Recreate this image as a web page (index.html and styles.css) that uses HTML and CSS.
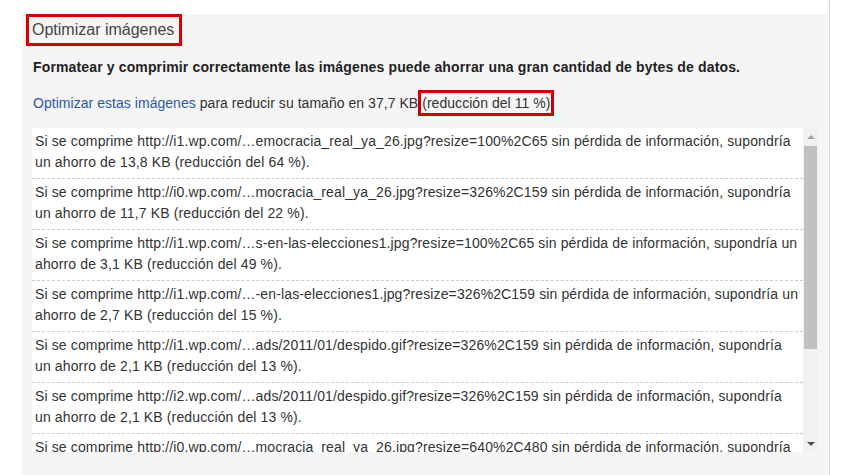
FILE: index.html
```html
<!DOCTYPE html>
<html lang="es">

<head>
  <meta charset="UTF-8">
  <meta name="viewport" content="width=device-width, initial-scale=1.0">
  <title>Optimizar imágenes</title>
  <link rel="stylesheet" href="styles.css">
</head>

<body>
  <div class="page">
    <section class="panel">
      <h2 class="rule-title">Optimizar imágenes</h2>
      <p class="summary">Formatear y comprimir correctamente las imágenes puede ahorrar una gran cantidad de bytes de datos.</p>
      <p class="hint"><a href="#">Optimizar estas imágenes</a> para reducir su tamaño en 37,7 KB<span class="mark">(reducción del 11 %)</span></p>
      <div class="list">
        <ul class="items">
          <li>Si se comprime http://i1.wp.com/…emocracia_real_ya_26.jpg?resize=100%2C65 sin pérdida de información, supondría un ahorro de 13,8 KB (reducción del 64 %).</li>
          <li>Si se comprime http://i0.wp.com/…mocracia_real_ya_26.jpg?resize=326%2C159 sin pérdida de información, supondría un ahorro de 11,7 KB (reducción del 22 %).</li>
          <li>Si se comprime http://i1.wp.com/…s-en-las-elecciones1.jpg?resize=100%2C65 sin pérdida de información, supondría un ahorro de 3,1 KB (reducción del 49 %).</li>
          <li>Si se comprime http://i1.wp.com/…-en-las-elecciones1.jpg?resize=326%2C159 sin pérdida de información, supondría un ahorro de 2,7 KB (reducción del 15 %).</li>
          <li>Si se comprime http://i1.wp.com/…ads/2011/01/despido.gif?resize=326%2C159 sin pérdida de información, supondría un ahorro de 2,1 KB (reducción del 13 %).</li>
          <li>Si se comprime http://i2.wp.com/…ads/2011/01/despido.gif?resize=326%2C159 sin pérdida de información, supondría un ahorro de 2,1 KB (reducción del 13 %).</li>
          <li>Si se comprime http://i0.wp.com/…mocracia_real_ya_26.jpg?resize=640%2C480 sin pérdida de información, supondría un ahorro de 1,9 KB (reducción del 2 %).</li>
        </ul>
        <div class="scrollbar">
          <span class="arrow up"></span>
          <div class="track">
            <div class="thumb"></div>
          </div>
          <span class="arrow down"></span>
        </div>
      </div>
    </section>
  </div>
</body>

</html>
```

FILE: styles.css
```css
body {
  margin: 0;
  background-color: #fff;
  font-family: "Liberation Sans", Arial, sans-serif;
  font-size: 14px;
  color: #333;
}

.page {
  width: 830px;
  height: 475px;
  padding: 14px 1px 0 22px;
  box-sizing: border-box;
  border-right: 1px solid #dcdcdc;
  overflow: hidden;
}

.panel {
  width: 806px;
  height: 461px;
  background-color: #f5f5f5;
  overflow: hidden;
}

.rule-title {
  width: fit-content;
  margin: 0 0 0 4px;
  padding: 0 5px 0 3px;
  border: 3px solid #d40000;
  font-size: 16px;
  font-weight: normal;
  line-height: 26px;
  color: #444;
}

.summary {
  margin: 11px 0 0 11px;
  font-weight: bold;
  line-height: 21px;
  letter-spacing: .14px;
  color: #222;
}

.hint {
  margin: 15px 0 0 11px;
  line-height: 21px;
  letter-spacing: .04px;
}

.hint a {
  color: #2b5aa8;
  text-decoration: none;
}

.mark {
  padding: 2px 1px;
  border: 3px solid #d40000;
}

.list {
  display: flex;
  width: 786px;
  height: 324px;
  margin: 14px 0 0 10px;
  background-color: #fff;
}

.items {
  flex: 1;
  margin: 0;
  padding: 0;
  list-style: none;
  overflow: hidden;
}

.items li {
  padding: 3px 3px 5px 3px;
  line-height: 21px;
  letter-spacing: .13px;
  border-bottom: 1px dashed #ccc;
}

.scrollbar {
  display: flex;
  flex-direction: column;
  width: 15px;
  background-color: #f1f1f1;
}

.arrow {
  display: flex;
  justify-content: center;
  align-items: center;
  height: 17px;
}

.arrow::before {
  content: '';
  border-left: 4px solid transparent;
  border-right: 4px solid transparent;
}

.arrow.up::before {
  border-bottom: 4px solid #a3a3a3;
}

.arrow.down::before {
  border-top: 4px solid #505050;
}

.track {
  flex: 1;
  padding: 1px 1px 0;
}

.thumb {
  height: 203px;
  background-color: #c1c1c1;
}
```
